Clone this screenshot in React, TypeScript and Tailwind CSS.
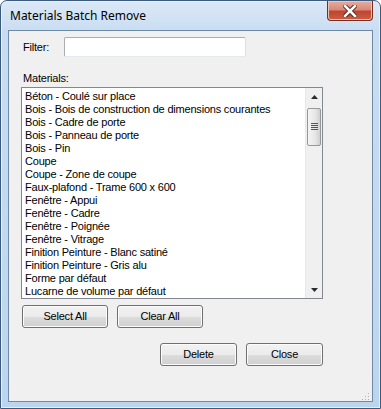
import React from "react";

const materials = [
  "Béton - Coulé sur place",
  "Bois - Bois de construction de dimensions courantes",
  "Bois - Cadre de porte",
  "Bois - Panneau de porte",
  "Bois - Pin",
  "Coupe",
  "Coupe - Zone de coupe",
  "Faux-plafond - Trame 600 x 600",
  "Fenêtre - Appui",
  "Fenêtre - Cadre",
  "Fenêtre - Poignée",
  "Fenêtre - Vitrage",
  "Finition Peinture - Blanc satiné",
  "Finition Peinture - Gris alu",
  "Forme par défaut",
  "Lucarne de volume par défaut",
];

function WinButton({ label, width }: { label: string; width: string }) {
  return (
    <button
      className={`${width} h-[23px] rounded-[3px] border border-[#707070] bg-[linear-gradient(#f2f2f2_0%,#ebebeb_50%,#dddddd_51%,#cfcfcf_100%)] text-[11px] tracking-[-0.2px] text-black shadow-[inset_0_0_0_1px_#fcfcfc]`}
    >
      {label}
    </button>
  );
}

function Scrollbar() {
  return (
    <div className="flex h-full w-[17px] flex-col bg-[#f0f0f0] border-l border-[#e8e8e8]">
      <div className="flex h-[17px] items-center justify-center">
        <svg width="7" height="4" viewBox="0 0 7 4">
          <path d="M3.5 0 L7 4 L0 4 Z" fill="#2b2b2b" />
        </svg>
      </div>
      <div className="mx-[1px] mt-[3px] flex h-[38px] items-center justify-center rounded-[2px] border border-[#979797] bg-[linear-gradient(90deg,#f4f4f4_0%,#e6e6e6_60%,#d0d0d0_100%)]">
        <svg width="7" height="8" viewBox="0 0 7 8">
          <path d="M0 0.5 H7 M0 2.5 H7 M0 4.5 H7 M0 6.5 H7" stroke="#555" strokeWidth="1" />
        </svg>
      </div>
      <div className="flex-1" />
      <div className="flex h-[17px] items-center justify-center">
        <svg width="7" height="4" viewBox="0 0 7 4">
          <path d="M0 0 L7 0 L3.5 4 Z" fill="#2b2b2b" />
        </svg>
      </div>
    </div>
  );
}

export default function App() {
  return (
    <div className="w-[381px] h-[409px] bg-white font-['Liberation_Sans',Arial,sans-serif]">
      <div className="flex h-full w-full flex-col rounded-t-[7px] border border-[#3c5a7c] bg-[linear-gradient(#dbe9f7_0%,#c9ddf2_30px,#bcd5ee_100%)] shadow-[inset_0_0_0_1px_#e8f1fb]">
        {/* title bar */}
        <div className="flex h-[29px] shrink-0 items-start justify-between">
          <span className="mt-[7px] ml-[9px] text-[12px] text-black font-['Noto_Sans',sans-serif] leading-[15px]">
            Materials Batch Remove
          </span>
          <div className="mr-[7px] flex h-[20px] w-[46px] items-center justify-center rounded-b-[4px] border border-t-0 border-[#7a2c22] bg-[linear-gradient(#e6ada1_0%,#d88a78_45%,#c0452f_55%,#cd5d42_100%)] shadow-[inset_0_0_0_1px_#f1c2b6]">
            <svg width="14" height="12" viewBox="0 0 14 12">
              <path d="M2 1 L12 11 M12 1 L2 11" stroke="#4a1a12" strokeWidth="4.4" strokeLinecap="square" />
              <path d="M2 1 L12 11 M12 1 L2 11" stroke="#ffffff" strokeWidth="2.6" strokeLinecap="square" />
            </svg>
          </div>
        </div>

        {/* client area */}
        <div className="mx-[7px] mb-[7px] flex-1 border border-[#6f89a8] bg-[#f0f0f0] text-[11px] tracking-[-0.2px] text-black">
          <div className="ml-[14px] mt-[6px] flex items-center">
            <span className="w-[41px] pt-[1px]">Filter:</span>
            <div className="h-[20px] w-[182px] rounded-[2px] border border-[#abadb3] border-b-[#e3e9ef] border-r-[#dbdfe6] bg-white" />
          </div>

          <div className="ml-[14px] mt-[15px] leading-[13px]">Materials:</div>

          <div className="ml-[12px] mt-[2px] flex h-[212px] w-[302px] border border-[#828790] bg-white">
            <div className="flex-1 overflow-hidden pl-[3px] pt-[2px]">
              {materials.map((m) => (
                <div key={m} className="h-[13px] whitespace-nowrap leading-[13px]">
                  {m}
                </div>
              ))}
            </div>
            <Scrollbar />
          </div>

          <div className="ml-[13px] mt-[6px] flex gap-[9px]">
            <WinButton label="Select All" width="w-[86px]" />
            <WinButton label="Clear All" width="w-[86px]" />
          </div>

          <div className="ml-[151px] mt-[15px] flex gap-[9px]">
            <WinButton label="Delete" width="w-[77px]" />
            <WinButton label="Close" width="w-[77px]" />
          </div>

          <div className="flex justify-end pr-[2px] pt-[26px]">
            <svg width="9" height="9" viewBox="0 0 9 9">
              <rect x="7" y="1" width="1" height="1" fill="#b0b0b0" />
              <rect x="4" y="4" width="1" height="1" fill="#b0b0b0" />
              <rect x="7" y="4" width="1" height="1" fill="#b0b0b0" />
              <rect x="1" y="7" width="1" height="1" fill="#b0b0b0" />
              <rect x="4" y="7" width="1" height="1" fill="#b0b0b0" />
              <rect x="7" y="7" width="1" height="1" fill="#b0b0b0" />
            </svg>
          </div>
        </div>
      </div>
    </div>
  );
}
